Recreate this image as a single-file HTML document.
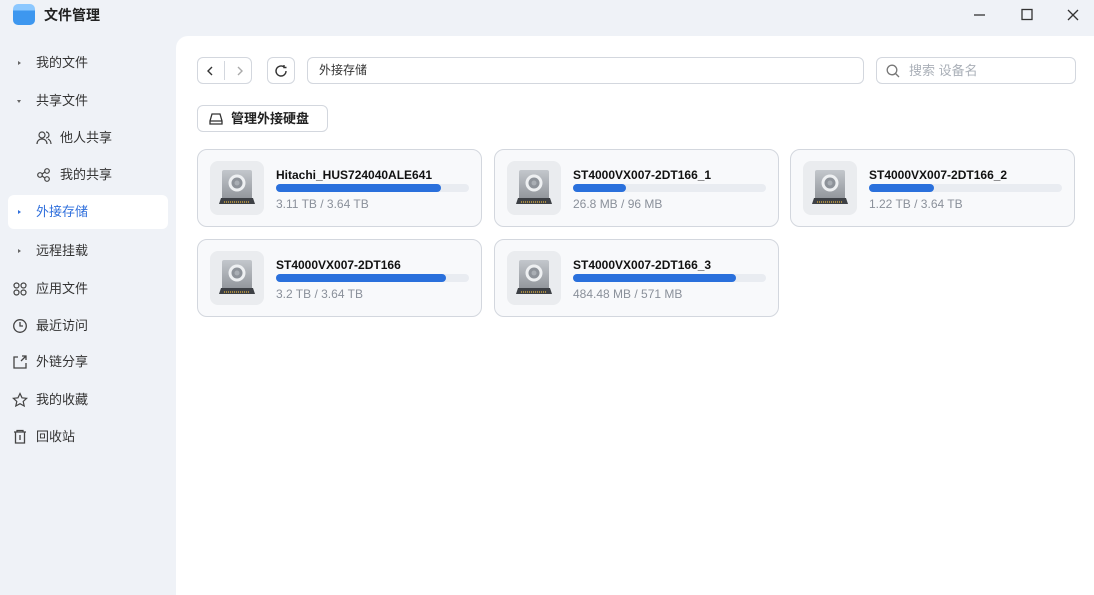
<!DOCTYPE html>
<html><head><meta charset="utf-8"><style>
*{box-sizing:border-box;margin:0;padding:0}
body{width:1094px;height:595px;background:#eff2f7;font-family:"Liberation Sans","Noto Sans CJK SC",sans-serif;position:relative;overflow:hidden;color:#222}
.abs{position:absolute}
.title{left:44px;top:5px;font-size:14px;font-weight:bold;line-height:20px}
.logo{left:13px;top:4px;width:22px;height:21px;border-radius:5px;background:linear-gradient(#8cc8ff 0 30%,#3d97ef 30%)}
.nav{left:0;width:176px;font-size:13px;color:#333}
.item{position:absolute;left:8px;width:160px;height:34px;line-height:34px;border-radius:6px}
.item .t{position:absolute;left:28px}
.item .t2{position:absolute;left:52px}
.item.sel{background:#fff;color:#2f6fdc}
.tri{position:absolute;left:10px;top:15px;width:0;height:0;border-left:3px solid #666;border-top:2.5px solid transparent;border-bottom:2.5px solid transparent}
.tri.d{border-top:3px solid #666;border-left:2.5px solid transparent;border-right:2.5px solid transparent;border-bottom:0;top:16px;left:9px}
.sel .tri{border-left-color:#2f6fdc}
.ic{position:absolute;top:9px;left:4px}
.ic2{position:absolute;top:9px;left:28px}
.main{left:176px;top:36px;width:918px;height:559px;background:#fff;border-top-left-radius:12px}
.btn{position:absolute;border:1px solid #d3d7de;border-radius:6px;background:#fff}
.card{position:absolute;width:285px;height:78px;border:1px solid #d3d7de;border-radius:10px;background:#f8f9fb}
.card .box{position:absolute;left:12px;top:11px;width:54px;height:54px;border-radius:8px;background:#eaecef}
.card .nm{position:absolute;left:78px;top:18px;font-size:12px;font-weight:bold;color:#111}
.card .bar{position:absolute;left:78px;top:34px;width:193px;height:8px;border-radius:4px;background:#e9ecf1}
.card .bar i{display:block;height:8px;border-radius:4px;background:#2a70dc}
.card .sz{position:absolute;left:78px;top:47px;font-size:12px;color:#8a909a}
</style></head><body>
<div class="abs logo"></div>
<div class="abs title">文件管理</div>
<svg class="abs" style="left:972px;top:8px" width="110" height="14" stroke="#333" stroke-width="1.3" fill="none">
<path d="M2 7h11"/><rect x="50" y="1.5" width="10" height="10"/><path d="M96 2l10 10M106 2l-10 10"/></svg>

<div class="abs nav" style="top:0">
<div class="item" style="top:46px"><span class="tri"></span><span class="t">我的文件</span></div>
<div class="item" style="top:84px"><span class="tri d"></span><span class="t">共享文件</span></div>
<div class="item" style="top:121px"><svg class="ic2" width="16" height="16" stroke="#444" stroke-width="1.2" fill="none"><circle cx="6" cy="5" r="3"/><path d="M1 14c0-3 2-5 5-5s5 2 5 5M10 2a3 3 0 0 1 0 6M12 9c2 1 3 3 3 5"/></svg><span class="t2">他人共享</span></div>
<div class="item" style="top:158px"><svg class="ic2" width="16" height="16" stroke="#444" stroke-width="1.2" fill="none"><circle cx="4" cy="8" r="2.3"/><circle cx="11" cy="4" r="2.3"/><circle cx="11" cy="12" r="2.3"/><path d="M6 7l3-2M6 9l3 2"/></svg><span class="t2">我的共享</span></div>
<div class="item sel" style="top:195px"><span class="tri"></span><span class="t">外接存储</span></div>
<div class="item" style="top:234px"><span class="tri"></span><span class="t">远程挂载</span></div>
<div class="item" style="top:272px"><svg class="ic" width="16" height="16" stroke="#444" stroke-width="1.2" fill="none"><circle cx="4.5" cy="4.5" r="2.5"/><circle cx="11.5" cy="4.5" r="2.5"/><circle cx="4.5" cy="11.5" r="2.5"/><circle cx="11.5" cy="11.5" r="2.5"/></svg><span class="t">应用文件</span></div>
<div class="item" style="top:309px"><svg class="ic" width="16" height="16" stroke="#444" stroke-width="1.3" fill="none"><circle cx="8" cy="8" r="6.3"/><path d="M8 4v4h3"/></svg><span class="t">最近访问</span></div>
<div class="item" style="top:345px"><svg class="ic" width="16" height="16" stroke="#444" stroke-width="1.3" fill="none"><path d="M6 3H2v11h12v-5M9 7l5-5M10 2h4v4"/></svg><span class="t">外链分享</span></div>
<div class="item" style="top:383px"><svg class="ic" width="16" height="16" stroke="#444" stroke-width="1.2" fill="none"><path d="M8 1.5l2 4.3 4.6.5-3.4 3.1 1 4.6L8 11.7 3.8 14l1-4.6L1.4 6.3 6 5.8z"/></svg><span class="t">我的收藏</span></div>
<div class="item" style="top:420px"><svg class="ic" width="16" height="16" stroke="#444" stroke-width="1.3" fill="none"><path d="M2 3h12M5 3V1.5h6V3M3.5 3v11h9V3M8 6v5"/></svg><span class="t">回收站</span></div>
</div>

<div class="abs main"></div>
<div class="btn" style="left:197px;top:57px;width:55px;height:27px"><div style="position:absolute;left:26px;top:3px;width:1px;height:19px;background:#d3d7de"></div>
<svg class="abs" style="left:8px;top:7px" width="40" height="12" fill="none" stroke-width="1.4"><path d="M6 2L2 6l4 4" stroke="#333"/><path d="M32 2l4 4-4 4" stroke="#aaa"/></svg></div>
<div class="btn" style="left:267px;top:57px;width:28px;height:27px"><svg class="abs" style="left:6px;top:6px" width="14" height="14" fill="none" stroke="#333" stroke-width="1.4"><path d="M12 7a5 5 0 1 1-2-4M10 1v2.5h2.5"/></svg></div>
<div class="btn" style="left:307px;top:57px;width:557px;height:27px;font-size:12px;line-height:25px;padding-left:11px;color:#333">外接存储</div>
<div class="btn" style="left:876px;top:57px;width:200px;height:27px;font-size:13px;line-height:25px;padding-left:32px;color:#aab0b8">搜索 设备名<svg class="abs" style="left:9px;top:6px" width="14" height="14" fill="none" stroke="#777" stroke-width="1.3"><circle cx="6" cy="6" r="4.8"/><path d="M9.5 9.5l3.5 3.5"/></svg></div>
<div class="btn" style="left:197px;top:105px;width:131px;height:27px;font-size:13px;line-height:25px;padding-left:33px;color:#222;font-weight:bold">管理外接硬盘<svg class="abs" style="left:11px;top:6px" width="14" height="14" fill="none" stroke="#333" stroke-width="1.3"><path d="M3 2h8l2 7v3H1V9zM1 9h12"/></svg></div>

<svg width="0" height="0" style="position:absolute"><defs><g id="hd">
<rect x="12" y="9" width="30" height="31" rx="2" fill="url(#g)"/>
<circle cx="27" cy="22" r="8.5" fill="#eef0f2"/><circle cx="27" cy="22" r="5.5" fill="#8d9299"/><circle cx="27" cy="22" r="2.5" fill="#a9aeb4"/>
<path d="M11 37h32l2 6H9z" fill="#3d4045"/><path d="M14 41h26" stroke="#c8a040" stroke-width="1.5" stroke-dasharray="1 1"/>
</g><linearGradient id="g" x1="0" y1="0" x2="0" y2="1"><stop offset="0" stop-color="#c3c7cc"/><stop offset="1" stop-color="#8e9298"/></linearGradient></defs></svg>

<div class="card" style="left:197px;top:149px"><div class="box"><svg width="54" height="54"><use href="#hd"/></svg></div><div class="nm">Hitachi_HUS724040ALE641</div><div class="bar"><i style="width:165px"></i></div><div class="sz">3.11 TB / 3.64 TB</div></div>
<div class="card" style="left:494px;top:149px"><div class="box"><svg width="54" height="54"><use href="#hd"/></svg></div><div class="nm">ST4000VX007-2DT166_1</div><div class="bar"><i style="width:53px"></i></div><div class="sz">26.8 MB / 96 MB</div></div>
<div class="card" style="left:790px;top:149px"><div class="box"><svg width="54" height="54"><use href="#hd"/></svg></div><div class="nm">ST4000VX007-2DT166_2</div><div class="bar"><i style="width:65px"></i></div><div class="sz">1.22 TB / 3.64 TB</div></div>
<div class="card" style="left:197px;top:239px"><div class="box"><svg width="54" height="54"><use href="#hd"/></svg></div><div class="nm">ST4000VX007-2DT166</div><div class="bar"><i style="width:170px"></i></div><div class="sz">3.2 TB / 3.64 TB</div></div>
<div class="card" style="left:494px;top:239px"><div class="box"><svg width="54" height="54"><use href="#hd"/></svg></div><div class="nm">ST4000VX007-2DT166_3</div><div class="bar"><i style="width:163px"></i></div><div class="sz">484.48 MB / 571 MB</div></div>
</body></html>
